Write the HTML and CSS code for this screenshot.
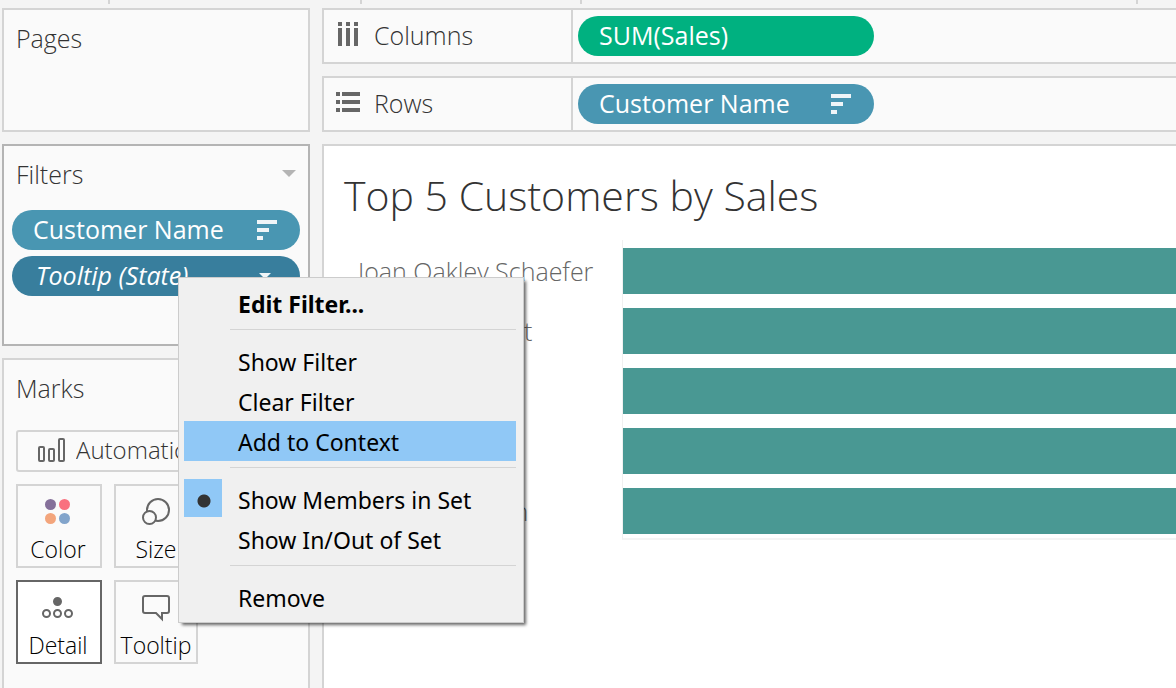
FILE: index.html
```html
<!DOCTYPE html>
<html lang="en">
<head>
  <meta charset="UTF-8">
  <meta name="viewport" content="width=device-width, initial-scale=1.0">
  <title>Top 5 Customers by Sales</title>
  <link rel="stylesheet" href="styles.css">
</head>
<body>
  <!-- Bottom edge of the toolbar -->
  <div class="toolbar-edge">
    <span class="tick"></span>
    <span class="tick"></span>
    <span class="tick"></span>
    <span class="tick"></span>
  </div>

  <div class="workspace">
    <aside class="sidebar">
      <section class="card pages-card">
        <h2>Pages</h2>
      </section>

      <section class="card filters-card">
        <div class="card-header">
          <h2>Filters</h2>
          <button class="card-menu" aria-label="Filters menu">
            <svg width="14" height="8" viewBox="0 0 14 8"><path d="M0 0h14L7 7z" fill="#b4b4b4"/></svg>
          </button>
        </div>
        <ul class="pill-list">
          <li>
            <button class="pill dimension">
              <span>Customer Name</span>
              <svg class="sort-icon" width="20" height="20" viewBox="0 0 20 20"><path d="M0 0h20v4H0zM0 8h12v4H0zM0 16h6v4H0z"/></svg>
            </button>
          </li>
          <li class="pill-open">
            <button class="pill dimension selected" aria-haspopup="menu" aria-expanded="true">
              <span>Tooltip (State)</span>
              <svg class="arrow-icon" width="12" height="7" viewBox="0 0 12 7"><path d="M0 0h12L6 6z"/></svg>
            </button>

            <!-- Filter context menu -->
            <div class="context-menu" role="menu">
              <button class="menu-item default" role="menuitem">Edit Filter...</button>
              <hr>
              <button class="menu-item" role="menuitem">Show Filter</button>
              <button class="menu-item" role="menuitem">Clear Filter</button>
              <button class="menu-item active" role="menuitem">Add to Context</button>
              <hr>
              <button class="menu-item checked" role="menuitemradio" aria-checked="true">Show Members in Set</button>
              <button class="menu-item" role="menuitemradio" aria-checked="false">Show In/Out of Set</button>
              <hr>
              <button class="menu-item" role="menuitem">Remove</button>
            </div>
          </li>
        </ul>
      </section>

      <section class="card marks-card">
        <h2>Marks</h2>
        <div class="mark-type">
          <svg width="28" height="24" viewBox="0 0 28 24" fill="none" stroke="#666" stroke-width="2">
            <rect x="1" y="9" width="5" height="14" rx="1"/>
            <rect x="11" y="11" width="5" height="12" rx="1"/>
            <rect x="21" y="1" width="5" height="22" rx="1"/>
          </svg>
          <select aria-label="Mark type">
            <option>Automatic</option>
          </select>
        </div>
        <div class="mark-buttons">
          <button class="mark-button">
            <svg width="40" height="28" viewBox="0 0 40 28">
              <circle cx="12.5" cy="6.5" r="5.5" fill="#85709a"/>
              <circle cx="26.5" cy="6.5" r="5.5" fill="#f9707f"/>
              <circle cx="12.5" cy="20.5" r="5.5" fill="#f3a57c"/>
              <circle cx="26.5" cy="20.5" r="5.5" fill="#82a4cb"/>
            </svg>
            Color
          </button>
          <button class="mark-button">
            <svg width="40" height="28" viewBox="0 0 40 28" fill="#fafafa" stroke="#666" stroke-width="2">
              <circle cx="22" cy="12" r="11"/>
              <circle cx="13.5" cy="19.5" r="6.5"/>
            </svg>
            Size
          </button>
          <button class="mark-button selected">
            <svg width="40" height="28" viewBox="0 0 40 28" fill="none" stroke="#666" stroke-width="2">
              <circle cx="19.5" cy="7.5" r="3.5" fill="#666"/>
              <circle cx="8.5" cy="19.5" r="3.5"/>
              <circle cx="19.5" cy="19.5" r="3.5"/>
              <circle cx="30.5" cy="19.5" r="3.5"/>
            </svg>
            Detail
          </button>
          <button class="mark-button">
            <svg width="40" height="28" viewBox="0 0 40 28" fill="none" stroke="#666" stroke-width="2">
              <path d="M9 2h22q2 0 2 2v13q0 2-2 2h-5v6l-6-6H9q-2 0-2-2V4q0-2 2-2z"/>
            </svg>
            Tooltip
          </button>
        </div>
      </section>
    </aside>

    <main class="view">
      <section class="shelf">
        <div class="shelf-label">
          <svg width="24" height="28" viewBox="0 0 24 28" fill="#666"><path d="M2 0h4v4H2zM10 0h4v4h-4zM18 0h4v4h-4zM2 6h4v18H2zM10 6h4v18h-4zM18 6h4v18h-4z"/></svg>
          <h2>Columns</h2>
        </div>
        <button class="pill measure"><span>SUM(Sales)</span></button>
      </section>

      <section class="shelf">
        <div class="shelf-label">
          <svg width="24" height="24" viewBox="0 0 24 24" fill="#666"><path d="M0 0h4v4H0zM6 0h18v4H6zM0 8h4v4H0zM6 8h18v4H6zM0 16h4v4H0zM6 16h18v4H6z"/></svg>
          <h2>Rows</h2>
        </div>
        <button class="pill dimension">
          <span>Customer Name</span>
          <svg class="sort-icon" width="20" height="20" viewBox="0 0 20 20"><path d="M0 0h20v4H0zM0 8h12v4H0zM0 16h6v4H0z"/></svg>
        </button>
      </section>

      <section class="canvas">
        <h1>Top 5 Customers by Sales</h1>
        <div class="chart">
          <div class="row"><span class="name">Joan Oakley Schaefer</span><div class="track"><div class="bar"></div></div></div>
          <div class="row"><span class="name">Benjamin Brent</span><div class="track"><div class="bar"></div></div></div>
          <div class="row"><span class="name">Tamara Chand</span><div class="track"><div class="bar"></div></div></div>
          <div class="row"><span class="name">Sanjit Engle</span><div class="track"><div class="bar"></div></div></div>
          <div class="row"><span class="name">Brosina Nelson</span><div class="track"><div class="bar"></div></div></div>
        </div>
      </section>
    </main>
  </div>
</body>
</html>
```
FILE: styles.css
```css
* {
  box-sizing: border-box;
}

body {
  margin: 0;
  min-height: 100vh;
  display: flex;
  flex-direction: column;
  background-color: #f4f4f4;
  color: #333;
  font-family: "Open Sans", "Noto Sans", sans-serif;
  font-size: 25px;
  font-weight: 300;
  line-height: 32px;
}

h1, h2, ul {
  margin: 0;
  padding: 0;
  font-weight: 300;
}

h2 {
  font-size: 25px;
}

button, select {
  font: inherit;
  color: inherit;
  padding: 0;
  border: none;
  background: none;
}

svg {
  display: block;
  flex-shrink: 0;
}

/* Toolbar separators */
.toolbar-edge {
  display: grid;
  grid-template-columns: 108px 252px 220px 1fr 40px;
  height: 8px;
}

.tick {
  width: 2px;
  height: 4px;
  background-color: #d4d4d4;
}

.tick:nth-child(1) { grid-column: 2; }
.tick:nth-child(2) { grid-column: 3; }
.tick:nth-child(3) { grid-column: 4; }
.tick:nth-child(4) { grid-column: 5; }

.workspace {
  flex: 1;
  display: flex;
  gap: 12px;
  padding-left: 2px;
}

/* Sidebar cards */
.sidebar {
  width: 308px;
  flex-shrink: 0;
  display: flex;
  flex-direction: column;
  gap: 12px;
}

.card {
  border: 2px solid #d4d4d4;
  background-color: #fafafa;
  padding: 12px 8px;
}

.card h2 {
  padding-left: 4px;
}

.pages-card {
  height: 124px;
}

.filters-card {
  height: 202px;
  border-color: #b4b4b4;
}

.card-header {
  display: flex;
  align-items: center;
  justify-content: space-between;
  padding-right: 4px;
}

.marks-card {
  flex: 1;
  border-bottom: none;
  padding: 12px;
}

.marks-card h2 {
  padding-left: 0;
}

/* Pills */
.pill-list {
  list-style: none;
  display: flex;
  flex-direction: column;
  gap: 6px;
  margin-top: 20px;
}

.pill {
  display: flex;
  align-items: center;
  justify-content: space-between;
  width: 288px;
  height: 40px;
  padding: 0 23px 0 21px;
  border-radius: 20px;
  color: #fff;
  font-weight: 500;
}

.pill span {
  padding-bottom: 2px;
}

.pill svg {
  fill: #eff5f8;
}

.measure {
  background-color: #00b180;
}

.dimension {
  background-color: #4996b2;
}

.dimension.selected {
  padding-left: 24px;
  background-color: #387e9d;
  font-style: italic;
}

.pill .arrow-icon {
  margin-right: 6px;
}

/* Context menu */
.pill-open {
  position: relative;
}

.context-menu {
  position: absolute;
  top: 21px;
  left: 166px;
  z-index: 10;
  width: 346px;
  padding: 5px 7px 5px 5px;
  border: 1px solid #ccc;
  background-color: #f0f0f0;
  box-shadow: 3px 3px 3px -1px rgba(0, 0, 0, 0.6);
  font-family: "Noto Sans", sans-serif;
  font-size: 23px;
  font-weight: 400;
  color: #000;
}

.context-menu hr {
  margin: 6px 0 11px 46px;
  border: none;
  border-top: 1px solid #d4d4d4;
}

.menu-item {
  display: block;
  width: 100%;
  height: 40px;
  padding: 2px 0 0 54px;
  text-align: left;
}

.menu-item.default {
  font-weight: 700;
}

.menu-item.active {
  background-color: #90c8f6;
}

.menu-item.checked {
  background: radial-gradient(circle at 20px 22px, #333 6px, #90c8f6 7px) 0 0 / 38px 38px no-repeat;
}

/* Marks */
.mark-type {
  position: relative;
  margin-top: 26px;
}

.mark-type svg {
  position: absolute;
  top: 8px;
  left: 22px;
}

.mark-type select {
  display: block;
  width: 100%;
  height: 42px;
  padding: 0 0 2px 58px;
  border: 2px solid #d4d4d4;
  border-radius: 3px;
  font-size: 24px;
  appearance: none;
}

.mark-buttons {
  display: grid;
  grid-template-columns: 86px 84px;
  gap: 12px;
  margin-top: 12px;
}

.mark-button {
  display: flex;
  flex-direction: column;
  align-items: center;
  justify-content: flex-end;
  gap: 7px;
  height: 84px;
  padding-bottom: 1px;
  border: 2px solid #d4d4d4;
  color: #000;
  font-size: 23px;
}

/* The left column is centred on the same 84px width as the right one */
.mark-button:nth-child(odd) {
  padding-right: 2px;
}

.mark-button.selected {
  border-color: #666;
  background-color: #fff;
}

/* Shelves */
.view {
  flex: 1;
  min-width: 0;
  display: flex;
  flex-direction: column;
  gap: 12px;
}

.shelf {
  display: flex;
  align-items: center;
  gap: 5px;
  height: 56px;
  border: 2px solid #d4d4d4;
  border-right: none;
  background-color: #fafafa;
}

.shelf .pill {
  width: 296px;
}

.shelf-label {
  display: flex;
  align-items: center;
  gap: 14px;
  width: 249px;
  height: 100%;
  padding-left: 12px;
  border-right: 2px solid #d4d4d4;
}

.shelf-label h2 {
  padding-bottom: 2px;
}

/* Worksheet */
.canvas {
  flex: 1;
  border: 2px solid #d4d4d4;
  border-width: 2px 0 0 2px;
  background-color: #fff;
}

.canvas h1 {
  padding: 21px 0 17px 20px;
  font-size: 41px;
  line-height: 56px;
}

.row {
  display: flex;
  align-items: center;
  height: 60px;
  padding-left: 34px;
}

.name {
  width: 264px;
  padding-top: 2px;
  color: #666;
}

.track {
  flex: 1;
  height: 100%;
  padding-top: 8px;
  border-left: 1px solid #f0f0f0;
}

.bar {
  height: 46px;
  background-color: #499893;
}

.row:last-child .track {
  border-bottom: 2px solid #f4f4f4;
}
```
